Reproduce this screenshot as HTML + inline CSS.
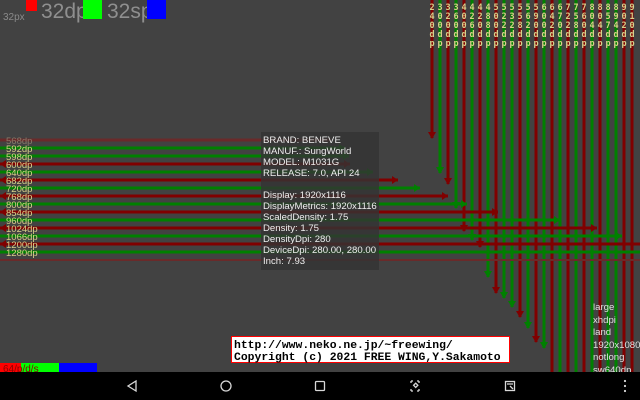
<!DOCTYPE html>
<html><head><meta charset="utf-8"><style>
html,body{margin:0;padding:0;background:#424242;width:640px;height:400px;overflow:hidden}
svg{position:absolute;left:0;top:0}
.lb{font-family:"Liberation Sans",sans-serif;font-size:9.5px;fill:#d8d08a}
.cl{font-family:"DejaVu Sans Mono","Liberation Mono",monospace;font-size:8.5px;fill:#d8d08a;text-anchor:middle;font-weight:bold}
</style></head><body>
<svg width="640" height="400" viewBox="0 0 640 400" xmlns="http://www.w3.org/2000/svg">
<rect width="640" height="400" fill="#424242"/>
<!-- verticals -->
<g stroke-width="3">
<line x1="432" y1="0" x2="432" y2="138" stroke="#800000"/>
<line x1="440" y1="0" x2="440" y2="173" stroke="#008000"/>
<line x1="448" y1="0" x2="448" y2="184" stroke="#800000"/>
<line x1="456" y1="0" x2="456" y2="208" stroke="#008000"/>
<line x1="464" y1="0" x2="464" y2="231" stroke="#800000"/>
<line x1="472" y1="0" x2="472" y2="240" stroke="#008000"/>
<line x1="480" y1="0" x2="480" y2="247" stroke="#800000"/>
<line x1="488" y1="0" x2="488" y2="277" stroke="#008000"/>
<line x1="496" y1="0" x2="496" y2="293" stroke="#800000"/>
<line x1="504" y1="0" x2="504" y2="298" stroke="#008000"/>
<line x1="512" y1="0" x2="512" y2="307" stroke="#008000"/>
<line x1="520" y1="0" x2="520" y2="317" stroke="#800000"/>
<line x1="528" y1="0" x2="528" y2="328" stroke="#008000"/>
<line x1="536" y1="0" x2="536" y2="342" stroke="#800000"/>
<line x1="544" y1="0" x2="544" y2="348" stroke="#008000"/>
<line x1="552" y1="0" x2="552" y2="372" stroke="#800000"/>
<line x1="560" y1="0" x2="560" y2="372" stroke="#008000"/>
<line x1="568" y1="0" x2="568" y2="372" stroke="#800000"/>
<line x1="576" y1="0" x2="576" y2="372" stroke="#008000"/>
<line x1="584" y1="0" x2="584" y2="372" stroke="#800000"/>
<line x1="592" y1="0" x2="592" y2="372" stroke="#008000"/>
<line x1="600" y1="0" x2="600" y2="372" stroke="#800000"/>
<line x1="608" y1="0" x2="608" y2="372" stroke="#008000"/>
<line x1="616" y1="0" x2="616" y2="372" stroke="#008000"/>
<line x1="624" y1="0" x2="624" y2="372" stroke="#800000"/>
<line x1="632" y1="0" x2="632" y2="372" stroke="#800000"/>
</g>
<g>
<polygon points="428,132 436,132 432,139" fill="#800000"/>
<polygon points="436,167 444,167 440,174" fill="#008000"/>
<polygon points="444,178 452,178 448,185" fill="#800000"/>
<polygon points="452,202 460,202 456,209" fill="#008000"/>
<polygon points="460,225 468,225 464,232" fill="#800000"/>
<polygon points="468,234 476,234 472,241" fill="#008000"/>
<polygon points="476,241 484,241 480,248" fill="#800000"/>
<polygon points="484,271 492,271 488,278" fill="#008000"/>
<polygon points="492,287 500,287 496,294" fill="#800000"/>
<polygon points="500,292 508,292 504,299" fill="#008000"/>
<polygon points="508,301 516,301 512,308" fill="#008000"/>
<polygon points="516,311 524,311 520,318" fill="#800000"/>
<polygon points="524,322 532,322 528,329" fill="#008000"/>
<polygon points="532,336 540,336 536,343" fill="#800000"/>
<polygon points="540,342 548,342 544,349" fill="#008000"/>
</g>
<!-- horizontals -->
<g stroke-width="3">
<line x1="0" y1="140" x2="331" y2="140" stroke="#6a2a2a"/>
<line x1="0" y1="148" x2="345" y2="148" stroke="#008000"/>
<line x1="0" y1="156" x2="349" y2="156" stroke="#008000"/>
<line x1="0" y1="164" x2="350" y2="164" stroke="#800000"/>
<line x1="0" y1="172" x2="373" y2="172" stroke="#008000"/>
<line x1="0" y1="180" x2="398" y2="180" stroke="#800000"/>
<line x1="0" y1="188" x2="420" y2="188" stroke="#008000"/>
<line x1="0" y1="196" x2="448" y2="196" stroke="#800000"/>
<line x1="0" y1="204" x2="467" y2="204" stroke="#008000"/>
<line x1="0" y1="212" x2="498" y2="212" stroke="#800000"/>
<line x1="0" y1="220" x2="560" y2="220" stroke="#008000"/>
<line x1="0" y1="228" x2="597" y2="228" stroke="#800000"/>
<line x1="0" y1="236" x2="622" y2="236" stroke="#008000"/>
<line x1="0" y1="244" x2="640" y2="244" stroke="#800000"/>
<line x1="0" y1="252" x2="640" y2="252" stroke="#008000"/>
<line x1="0" y1="260" x2="640" y2="260" stroke="#6a2a2a" stroke-width="2"/>
</g>
<g>
<polygon points="339,144 339,152 345,148" fill="#008000"/>
<polygon points="343,152 343,160 349,156" fill="#008000"/>
<polygon points="344,160 344,168 350,164" fill="#800000"/>
<polygon points="367,168 367,176 373,172" fill="#008000"/>
<polygon points="392,176 392,184 398,180" fill="#800000"/>
<polygon points="414,184 414,192 420,188" fill="#008000"/>
<polygon points="442,192 442,200 448,196" fill="#800000"/>
<polygon points="461,200 461,208 467,204" fill="#008000"/>
<polygon points="492,208 492,216 498,212" fill="#800000"/>
<polygon points="554,216 554,224 560,220" fill="#008000"/>
<polygon points="591,224 591,232 597,228" fill="#800000"/>
<polygon points="616,232 616,240 622,236" fill="#008000"/>
<polygon points="0,164 6,160 6,168" fill="#800000"/>
<polygon points="0,180 6,176 6,184" fill="#800000"/>
<polygon points="0,196 6,192 6,200" fill="#800000"/>
<polygon points="0,212 6,208 6,216" fill="#800000"/>
<polygon points="0,228 6,224 6,232" fill="#800000"/>
<polygon points="0,244 6,240 6,248" fill="#800000"/>
</g>
<!-- row labels -->
<g class="lb">
<text x="6" y="144" style="fill:#8a7a6a">568dp</text>
<text x="6" y="152">592dp</text>
<text x="6" y="160">598dp</text>
<text x="6" y="168">600dp</text>
<text x="6" y="176">640dp</text>
<text x="6" y="184">682dp</text>
<text x="6" y="192">720dp</text>
<text x="6" y="200">768dp</text>
<text x="6" y="208">800dp</text>
<text x="6" y="216">854dp</text>
<text x="6" y="224">960dp</text>
<text x="6" y="232">1024dp</text>
<text x="6" y="240">1066dp</text>
<text x="6" y="248">1200dp</text>
<text x="6" y="256">1280dp</text>
</g>
<!-- column labels -->
<g class="cl">
<text y="10"><tspan x="432">2</tspan><tspan x="440">3</tspan><tspan x="448">3</tspan><tspan x="456">3</tspan><tspan x="464">4</tspan><tspan x="472">4</tspan><tspan x="480">4</tspan><tspan x="488">4</tspan><tspan x="496">5</tspan><tspan x="504">5</tspan><tspan x="512">5</tspan><tspan x="520">5</tspan><tspan x="528">5</tspan><tspan x="536">5</tspan><tspan x="544">6</tspan><tspan x="552">6</tspan><tspan x="560">6</tspan><tspan x="568">7</tspan><tspan x="576">7</tspan><tspan x="584">7</tspan><tspan x="592">8</tspan><tspan x="600">8</tspan><tspan x="608">8</tspan><tspan x="616">8</tspan><tspan x="624">9</tspan><tspan x="632">9</tspan></text>
<text y="19"><tspan x="432">4</tspan><tspan x="440">0</tspan><tspan x="448">2</tspan><tspan x="456">6</tspan><tspan x="464">0</tspan><tspan x="472">2</tspan><tspan x="480">2</tspan><tspan x="488">8</tspan><tspan x="496">0</tspan><tspan x="504">2</tspan><tspan x="512">3</tspan><tspan x="520">5</tspan><tspan x="528">6</tspan><tspan x="536">9</tspan><tspan x="544">0</tspan><tspan x="552">4</tspan><tspan x="560">7</tspan><tspan x="568">2</tspan><tspan x="576">5</tspan><tspan x="584">6</tspan><tspan x="592">0</tspan><tspan x="600">0</tspan><tspan x="608">5</tspan><tspan x="616">9</tspan><tspan x="624">0</tspan><tspan x="632">1</tspan></text>
<text y="28"><tspan x="432">0</tspan><tspan x="440">0</tspan><tspan x="448">0</tspan><tspan x="456">0</tspan><tspan x="464">0</tspan><tspan x="472">6</tspan><tspan x="480">0</tspan><tspan x="488">8</tspan><tspan x="496">0</tspan><tspan x="504">2</tspan><tspan x="512">2</tspan><tspan x="520">8</tspan><tspan x="528">2</tspan><tspan x="536">0</tspan><tspan x="544">0</tspan><tspan x="552">2</tspan><tspan x="560">0</tspan><tspan x="568">2</tspan><tspan x="576">8</tspan><tspan x="584">0</tspan><tspan x="592">4</tspan><tspan x="600">4</tspan><tspan x="608">7</tspan><tspan x="616">4</tspan><tspan x="624">2</tspan><tspan x="632">0</tspan></text>
<text y="37"><tspan x="432">d</tspan><tspan x="440">d</tspan><tspan x="448">d</tspan><tspan x="456">d</tspan><tspan x="464">d</tspan><tspan x="472">d</tspan><tspan x="480">d</tspan><tspan x="488">d</tspan><tspan x="496">d</tspan><tspan x="504">d</tspan><tspan x="512">d</tspan><tspan x="520">d</tspan><tspan x="528">d</tspan><tspan x="536">d</tspan><tspan x="544">d</tspan><tspan x="552">d</tspan><tspan x="560">d</tspan><tspan x="568">d</tspan><tspan x="576">d</tspan><tspan x="584">d</tspan><tspan x="592">d</tspan><tspan x="600">d</tspan><tspan x="608">d</tspan><tspan x="616">d</tspan><tspan x="624">d</tspan><tspan x="632">d</tspan></text>
<text y="46"><tspan x="432">p</tspan><tspan x="440">p</tspan><tspan x="448">p</tspan><tspan x="456">p</tspan><tspan x="464">p</tspan><tspan x="472">p</tspan><tspan x="480">p</tspan><tspan x="488">p</tspan><tspan x="496">p</tspan><tspan x="504">p</tspan><tspan x="512">p</tspan><tspan x="520">p</tspan><tspan x="528">p</tspan><tspan x="536">p</tspan><tspan x="544">p</tspan><tspan x="552">p</tspan><tspan x="560">p</tspan><tspan x="568">p</tspan><tspan x="576">p</tspan><tspan x="584">p</tspan><tspan x="592">p</tspan><tspan x="600">p</tspan><tspan x="608">p</tspan><tspan x="616">p</tspan><tspan x="624">p</tspan><tspan x="632">p</tspan></text>
</g>
<!-- top-left -->
<text x="3" y="20" font-family="Liberation Sans,sans-serif" font-size="10" fill="#8a8a8a">32px</text>
<rect x="26" y="0" width="11" height="11" fill="#ff0000"/>
<text x="41" y="18" font-family="Liberation Sans,sans-serif" font-size="21" fill="#8f8f8f">32dp</text>
<rect x="83" y="0" width="19" height="19" fill="#00ff00"/>
<text x="107" y="18" font-family="Liberation Sans,sans-serif" font-size="21" fill="#8f8f8f">32sp</text>
<rect x="147" y="0" width="19" height="19" fill="#0000ff"/>
<!-- info box -->
<rect x="261" y="132" width="118" height="138" fill="#333333" fill-opacity="0.82"/>
<g font-family="Liberation Sans,sans-serif" font-size="9.6" fill="#eeeeee">
<text x="263" y="143">BRAND: BENEVE</text>
<text x="263" y="154">MANUF.: SungWorld</text>
<text x="263" y="165">MODEL: M1031G</text>
<text x="263" y="176">RELEASE: 7.0, API 24</text>
<text x="263" y="198">Display: 1920x1116</text>
<text x="263" y="209">DisplayMetrics: 1920x1116</text>
<text x="263" y="220">ScaledDensity: 1.75</text>
<text x="263" y="231">Density: 1.75</text>
<text x="263" y="242">DensityDpi: 280</text>
<text x="263" y="253">DeviceDpi: 280.00, 280.00</text>
<text x="263" y="264">Inch: 7.93</text>
</g>
<!-- right list -->
<g font-family="Liberation Sans,sans-serif" font-size="9.6" fill="#e0e0e0">
<text x="593" y="310">large</text>
<text x="593" y="323">xhdpi</text>
<text x="593" y="335">land</text>
<text x="593" y="348">1920x1080</text>
<text x="593" y="360">notlong</text>
<text x="593" y="373">sw640dp</text>
</g>
<!-- copyright -->
<rect x="231.5" y="336.5" width="278" height="26" fill="#ffffff" stroke="#ff0000" stroke-width="1"/>
<g font-family="Liberation Mono,monospace" font-size="11.4" fill="#000" font-weight="bold">
<text x="234" y="348">http://www.neko.ne.jp/~freewing/</text>
<text x="234" y="360">Copyright (c) 2021 FREE WING,Y.Sakamoto</text>
</g>
<!-- bottom-left -->
<rect x="0" y="363" width="21" height="10" fill="#ff0000"/>
<rect x="21" y="363" width="38" height="10" fill="#00ff00"/>
<rect x="59" y="363" width="38" height="10" fill="#0000ff"/>
<text x="3" y="372" font-family="Liberation Sans,sans-serif" font-size="10" fill="#8b0000">64/p/d/s</text>
<!-- nav -->
<rect x="0" y="372" width="640" height="28" fill="#000"/>
<g stroke="#d8d8d8" stroke-width="1.3" fill="none">
<polygon points="136,381 136,391 128,386"/>
<circle cx="226" cy="386" r="5"/>
<rect x="315.5" y="381.5" width="9" height="9" rx="1"/>
<path d="M411 381h2M417 381h2M411 381v2M419 381v2M411 391h2M417 391h2M411 391v-2M419 391v-2"/>
<rect x="413.5" y="383.5" width="3" height="3" transform="rotate(45 415 386)"/>
<rect x="505.5" y="381.5" width="9" height="9"/>
<path d="M507 384h6M510 386l3 3"/>
</g>
<g fill="#d8d8d8"><circle cx="625" cy="381" r="1.1"/><circle cx="625" cy="386" r="1.1"/><circle cx="625" cy="391" r="1.1"/></g>
</svg>
</body></html>
